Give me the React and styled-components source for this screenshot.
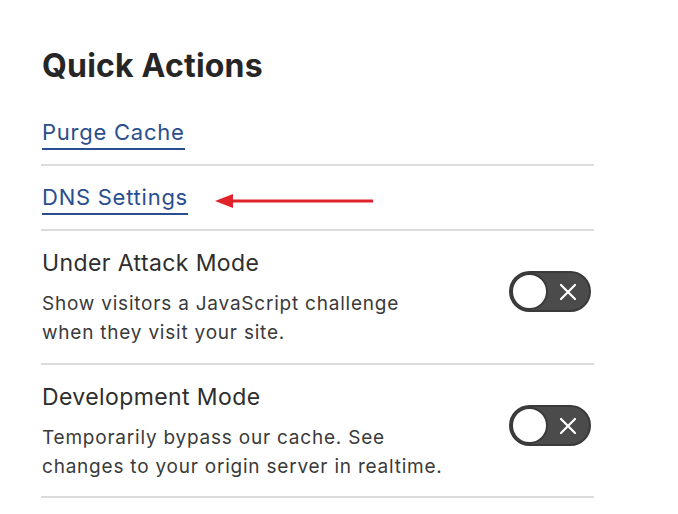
import React from "react";
import styled, { createGlobalStyle } from "styled-components";

const Global = createGlobalStyle`
  html, body { margin: 0; padding: 0; background: #ffffff; }
  body { font-family: Inter, "Liberation Sans", Arial, sans-serif; color: #333333; }
`;

const Panel = styled.div`
  width: 553px;
  padding: 46px 0 0 41px;
  display: flex;
  flex-direction: column;
`;

const Heading = styled.h2`
  margin: 0 0 0 1px;
  font-size: 32px;
  line-height: 40px;
  font-weight: 700;
  color: #262626;
  letter-spacing: 0.2px;
`;

const LinkRow = styled.div`
  display: flex;
  align-items: center;
  gap: 27px;
  height: ${(p) => p.$h}px;
  padding-top: ${(p) => p.$pt}px;
  box-sizing: border-box;
  border-bottom: 2px solid #dcdcdc;
`;

const ActionLink = styled.a`
  font-size: 22px;
  line-height: 30px;
  color: #2a4e8e;
  text-decoration: none;
  border-bottom: 2px solid #2a4e8e;
  padding-bottom: 1px;
  margin-left: 1px;
  letter-spacing: 0.75px;
`;

const Arrow = styled.svg`
  display: block;
  margin-top: 4px;
`;

const ToggleRow = styled.div`
  display: flex;
  justify-content: space-between;
  align-items: flex-start;
  padding: 17px 3px 0 1px;
  height: ${(p) => p.$h}px;
  box-sizing: border-box;
  border-bottom: 2px solid #dcdcdc;
`;

const TextCol = styled.div`
  display: flex;
  flex-direction: column;
  gap: 11px;
`;

const Title = styled.div`
  font-size: 23px;
  line-height: 30px;
  color: #2e2e2e;
  letter-spacing: 0.4px;
`;

const Desc = styled.div`
  font-size: 19px;
  line-height: 29px;
  color: #3a3a3a;
  letter-spacing: 0.78px;
`;

const Switch = styled.div`
  width: 82px;
  height: 41px;
  margin-top: 23px;
  border-radius: 21px;
  background: #4b4b4b;
  box-sizing: border-box;
  border: 2px solid #3a3a3a;
  display: flex;
  align-items: center;
  justify-content: space-between;
  padding: 0 12px 0 0;
`;

const Knob = styled.div`
  width: 37px;
  height: 37px;
  border-radius: 50%;
  background: #ffffff;
  box-sizing: border-box;
  border: 2px solid #3a3a3a;
`;

const Cross = () => (
  <svg width="18" height="18" viewBox="0 0 18 18">
    <path d="M2 2 L16 16 M16 2 L2 16" stroke="#ffffff" strokeWidth="2.2" strokeLinecap="round" />
  </svg>
);

const Toggle = () => (
  <Switch>
    <Knob />
    <Cross />
  </Switch>
);

export default function App() {
  return (
    <>
      <Global />
      <Panel>
        <Heading>Quick Actions</Heading>
        <LinkRow $h={80} $pt={16}>
          <ActionLink href="#">Purge Cache</ActionLink>
        </LinkRow>
        <LinkRow $h={65} $pt={2}>
          <ActionLink href="#">DNS Settings</ActionLink>
          <Arrow width="158" height="16" viewBox="0 0 158 16">
            <polygon points="0,8 18,1 18,15" fill="#e0232a" />
            <rect x="16" y="6.5" width="142" height="3" fill="#e0232a" />
          </Arrow>
        </LinkRow>
        <ToggleRow $h={134}>
          <TextCol>
            <Title>Under Attack Mode</Title>
            <Desc>
              Show visitors a JavaScript challenge
              <br />
              when they visit your site.
            </Desc>
          </TextCol>
          <Toggle />
        </ToggleRow>
        <ToggleRow $h={133}>
          <TextCol>
            <Title>Development Mode</Title>
            <Desc>
              Temporarily bypass our cache. See
              <br />
              changes to your origin server in realtime.
            </Desc>
          </TextCol>
          <Toggle />
        </ToggleRow>
      </Panel>
    </>
  );
}
